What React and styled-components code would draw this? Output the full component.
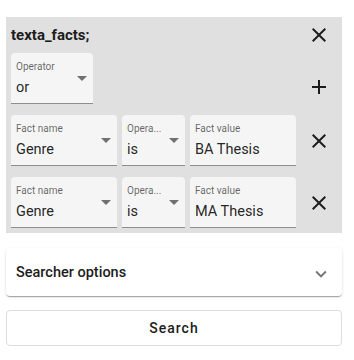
import styled, { createGlobalStyle } from "styled-components";

const GlobalStyle = createGlobalStyle`
  body {
    margin: 0;
    background: #ffffff;
    font-family: Roboto, "Liberation Sans", sans-serif;
    color: rgba(0, 0, 0, 0.87);
  }
`;

const Page = styled.div`
  width: 336px;
  padding: 17px 12px 0 6px;
  display: flex;
  flex-direction: column;
`;

const Panel = styled.div`
  background: #e0e0e0;
  padding: 0 0 5px 5px;
  display: flex;
  flex-direction: column;
`;

const TitleRow = styled.div`
  height: 36px;
  display: flex;
  align-items: center;
`;

const Title = styled.div`
  flex: 1;
  font-size: 15px;
  font-weight: 700;
  color: #1c1c1c;
`;

const Row = styled.div`
  display: flex;
  margin-bottom: ${(p) => p.$mb || 0}px;
`;

const Fields = styled.div`
  flex: 1;
  display: flex;
  gap: 5px;
`;

const Field = styled.div`
  position: relative;
  width: ${(p) => p.$w}px;
  height: 51px;
  background: #f5f5f5;
  border-radius: 4px 4px 0 0;
  border-bottom: 1px solid rgba(0, 0, 0, 0.42);
  padding: 0 5px;
  box-sizing: border-box;
  flex-shrink: 0;
`;

const Label = styled.div`
  font-size: 10px;
  color: rgba(0, 0, 0, 0.6);
  margin-top: 8px;
  line-height: 12px;
  white-space: nowrap;
`;

const Value = styled.div`
  font-size: 14.5px;
  line-height: 17px;
  margin-top: 6px;
  color: rgba(0, 0, 0, 0.87);
`;

const Arrow = styled.div`
  position: absolute;
  right: 6px;
  top: 23px;
  width: 0;
  height: 0;
  border-left: 5px solid transparent;
  border-right: 5px solid transparent;
  border-top: 5px solid rgba(0, 0, 0, 0.54);
`;

const IconCell = styled.div`
  width: 46px;
  display: flex;
  justify-content: center;
  align-items: ${(p) => p.$align || "center"};
  padding-bottom: ${(p) => p.$pb || 0}px;
  box-sizing: border-box;
`;

const Icon = styled.svg`
  width: 24px;
  height: 24px;
  fill: rgba(0, 0, 0, 0.87);
  display: block;
`;

const Card = styled.div`
  margin-top: 15px;
  height: 48px;
  border-radius: 4px;
  background: #fff;
  box-shadow: 0 2px 1px -1px rgba(0, 0, 0, 0.2), 0 1px 1px 0 rgba(0, 0, 0, 0.14),
    0 1px 3px 0 rgba(0, 0, 0, 0.12);
  display: flex;
  align-items: center;
  padding: 0 10px 0 10px;
`;

const CardTitle = styled.div`
  flex: 1;
  font-size: 14.5px;
  font-weight: 500;
  color: #1c1c1c;
`;

const Chevron = styled.svg`
  width: 22px;
  height: 22px;
  fill: rgba(0, 0, 0, 0.54);
  margin-top: 4px;
`;

const SearchButton = styled.button`
  margin-top: 14px;
  height: 36px;
  width: 100%;
  background: #fff;
  border: 1px solid #dcdcdc;
  border-radius: 4px;
  font-family: Roboto, "Liberation Sans", sans-serif;
  font-size: 14px;
  font-weight: 500;
  letter-spacing: 1px;
  color: #1c1c1c;
`;

const CloseIcon = () => (
  <Icon viewBox="0 0 24 24">
    <path d="M19 6.41 17.59 5 12 10.59 6.41 5 5 6.41 10.59 12 5 17.59 6.41 19 12 13.41 17.59 19 19 17.59 13.41 12z" />
  </Icon>
);

const AddIcon = () => (
  <Icon viewBox="0 0 24 24">
    <path d="M19 13h-6v6h-2v-6H5v-2h6V5h2v6h6v2z" />
  </Icon>
);

const SelectField = ({ width, label, value }) => (
  <Field $w={width}>
    <Label>{label}</Label>
    <Value>{value}</Value>
    <Arrow />
  </Field>
);

const TextField = ({ width, label, value }) => (
  <Field $w={width}>
    <Label>{label}</Label>
    <Value>{value}</Value>
  </Field>
);

const facts = [
  { name: "Genre", op: "is", value: "BA Thesis" },
  { name: "Genre", op: "is", value: "MA Thesis" },
];

const App = () => {
  return (
    <>
      <GlobalStyle />
      <Page>
        <Panel>
          <TitleRow>
            <Title>texta_facts;</Title>
            <IconCell>
              <CloseIcon />
            </IconCell>
          </TitleRow>
          <Row $mb={11}>
            <Fields>
              <SelectField width={82} label="Operator" value="or" />
            </Fields>
            <IconCell $align="flex-end" $pb={5}>
              <AddIcon />
            </IconCell>
          </Row>
          {facts.map((f, i) => (
            <Row key={i} $mb={i === 0 ? 11 : 0}>
              <Fields>
                <SelectField width={106} label="Fact name" value={f.name} />
                <SelectField width={63} label="Opera..." value={f.op} />
                <TextField width={106} label="Fact value" value={f.value} />
              </Fields>
              <IconCell>
                <CloseIcon />
              </IconCell>
            </Row>
          ))}
        </Panel>
        <Card>
          <CardTitle>Searcher options</CardTitle>
          <Chevron viewBox="0 0 24 24">
            <path d="M16.59 8.59 12 13.17 7.41 8.59 6 10l6 6 6-6z" />
          </Chevron>
        </Card>
        <SearchButton>Search</SearchButton>
      </Page>
    </>
  );
};

export default App;
